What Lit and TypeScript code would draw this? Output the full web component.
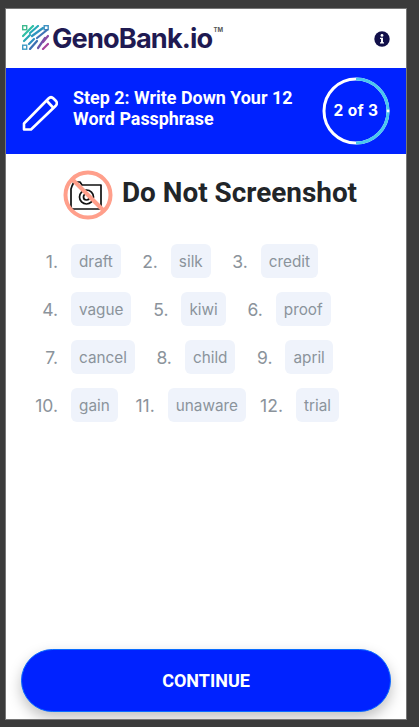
import { LitElement, html, css, svg } from "lit";
import { customElement } from "lit/decorators.js";

const WORDS = ["draft","silk","credit","vague","kiwi","proof","cancel","child","april","gain","unaware","trial"];

@customElement("app-root")
export class AppRoot extends LitElement {
  static styles = css`
    :host { display: block; height: 727px; background: #3b3b3b; box-sizing: border-box; padding: 8px 12px 7px 5px; overflow: hidden; }
    .panel { height: 712px; box-sizing: border-box; border: 1px solid #777; background: #fff; display: flex; flex-direction: column; overflow: hidden; font-family: Inter, sans-serif; }
    .top { height: 59px; flex: none; display: flex; align-items: center; padding: 0 16px 0 16px; justify-content: space-between; }
    .logo { display: flex; align-items: center; }
    .mark { width: 27px; height: 25px; flex: none; margin-top: -2px; margin-right: 3px; }
    .brand { font-family: Inter, sans-serif; font-weight: 700; font-size: 27.2px; letter-spacing: -0.85px; color: #1f1a52; line-height: 30px; }
    .tm { font-size: 6px; font-weight: 700; color: #555; align-self: flex-start; margin-top: 2px; margin-left: 1px; }
    .info { width: 16px; height: 16px; display: block; }
    .banner { height: 86px; flex: none; background: #0022ff; display: flex; align-items: center; padding: 0 16px 0 16px; color: #fff; }
    .pencil { width: 36px; height: 38px; flex: none; margin-right: 15px; margin-top: 3px; }
    .step { flex: 1; font-family: Roboto, sans-serif; font-weight: 700; font-size: 17.9px; line-height: 21px; margin-top: -6px; }
    .ring { position: relative; width: 68px; height: 68px; flex: none; display: flex; align-items: center; justify-content: center; margin-top: -1px; }
    .ring svg { position: absolute; inset: 0; width: 68px; height: 68px; }
    .ring span { position: relative; font-weight: 700; font-size: 15.5px; letter-spacing: 0.35px; font-family: Inter, sans-serif; }
    .warn { display: flex; justify-content: center; align-items: center; gap: 9px; padding: 13px 0 0 0; height: 54px; flex: none; margin-left: 8px; }
    .noshot { width: 50px; height: 50px; flex: none; margin-top: 2px; }
    h1 { margin: -3px 0 0; font-family: Roboto, sans-serif; font-weight: 700; font-size: 27.9px; color: #212529; }
    .words { display: flex; flex-wrap: wrap; gap: 14px 0; padding: 23px 0 0 15px; align-content: flex-start; flex: 1; }
    .row { display: flex; width: 100%; height: 34px; }
    .item { display: flex; align-items: flex-start; height: 34px; }
    .num { width: 37px; height: 34px; margin-right: 13px; text-align: right; font-size: 17.5px; line-height: 36px; color: #8b939b; }
    .chip { height: 34px; line-height: 36px; padding: 0 8px; background: #eff3fb; border-radius: 6px; font-size: 15.3px; color: #8b939b; }
    .cta { flex: none; margin: 0 15px 7px 15px; height: 63px; box-sizing: border-box; border: 1px solid #0a6cff; border-radius: 32px; background: #0022ff; color: #fff; font-family: Roboto, sans-serif; font-weight: 700; font-size: 18px; box-shadow: 0 6px 14px rgba(0,0,0,0.25); }
  `;

  private mark() {
    const sq = (x: number, y: number, c: string) => svg`<rect x=${x + .7} y=${y + .7} width="4" height="4" fill="none" stroke=${c} stroke-width="1.4"/>`;
    const ln = (x1: number, y1: number, x2: number, y2: number, c: string) => svg`<line x1=${x1} y1=${y1} x2=${x2} y2=${y2} stroke=${c} stroke-width="2.2" stroke-linecap="round"/>`;
    return html`<svg class="mark" viewBox="0 0 27 25">
      ${sq(0,0,"#3fb98f")}${sq(21.5,0,"#3d8fc0")}${sq(0,19.5,"#3d9ac4")}
      ${ln(7,5,11,1,"#2fbfa5")}${ln(1,11,6,6,"#2fbfa5")}
      ${ln(8,8,16,1,"#26a9b8")}${ln(2,16,8,10,"#2aa6b5")}
      ${ln(10,11,21,3,"#2e94c0")}${ln(7,19,12,14,"#2d8fc0")}
      ${ln(8,24,15,16,"#3b6fb3")}${ln(15,13,25,5,"#3f73b5")}
      ${ln(16,23,23,13,"#6a55a8")}${ln(21,24,26,19,"#a8429c")}
      ${ln(21,17,26,11,"#8a4aa4")}
    </svg>`;
  }

  render() {
    return html`<div class="panel">
      <div class="top">
        <div class="logo">${this.mark()}<span class="brand">GenoBank.io</span><span class="tm">TM</span></div>
        <svg class="info" viewBox="0 0 16 16"><circle cx="8" cy="8" r="7.7" fill="#12104a"/><circle cx="8" cy="4.4" r="1.4" fill="#fff"/><path d="M6 6.8h3v4.4h1v1.3H6v-1.3h1V8.1H6z" fill="#fff"/></svg>
      </div>
      <div class="banner">
        <svg class="pencil" viewBox="0 0 36 38" fill="none" stroke="#fff" stroke-width="2.6" stroke-linejoin="round"><path d="M2 35.5V29.5L26.5 4.5Q29 2 31.5 4.5L34 7Q36 9.5 33.5 12L9 35.5Z"/><path d="M24.5 6.5L31.5 14"/></svg>
        <div class="step">Step 2: Write Down Your 12<br>Word Passphrase</div>
        <div class="ring">
          <svg viewBox="0 0 68 68" fill="none" stroke-width="3"><circle cx="34" cy="34" r="32" stroke="#fff"/><path d="M34 2A32 32 0 0 1 34 66" stroke="#4ac7ee"/><circle cx="66" cy="34" r="1.4" fill="#fff"/></svg>
          <span>2 of 3</span>
        </div>
      </div>
      <div class="warn">
        <svg class="noshot" viewBox="0 0 50 50" fill="none">
          <g stroke="#111" stroke-width="1.7" stroke-linejoin="round"><path d="M8 19V37Q8 39 10 39H36Q38 39 38 37V15H19L17 12H11L9 16Z"/><circle cx="23.5" cy="27" r="7"/><circle cx="23.5" cy="27" r="3"/></g>
          <circle cx="25" cy="25" r="22.5" stroke="#ff9f8b" stroke-width="4"/>
          <path d="M9 9L41 41" stroke="#ff9f8b" stroke-width="4"/>
        </svg>
        <h1>Do Not Screenshot</h1>
      </div>
      <div class="words">
        ${[0, 3, 6, 9].map((s) => html`<div class="row">${WORDS.slice(s, s + 3).map((w, i) => html`<div class="item"><span class="num">${s + i + 1}.</span><span class="chip">${w}</span></div>`)}</div>`)}
      </div>
      <button class="cta">CONTINUE</button>
    </div>`;
  }
}
